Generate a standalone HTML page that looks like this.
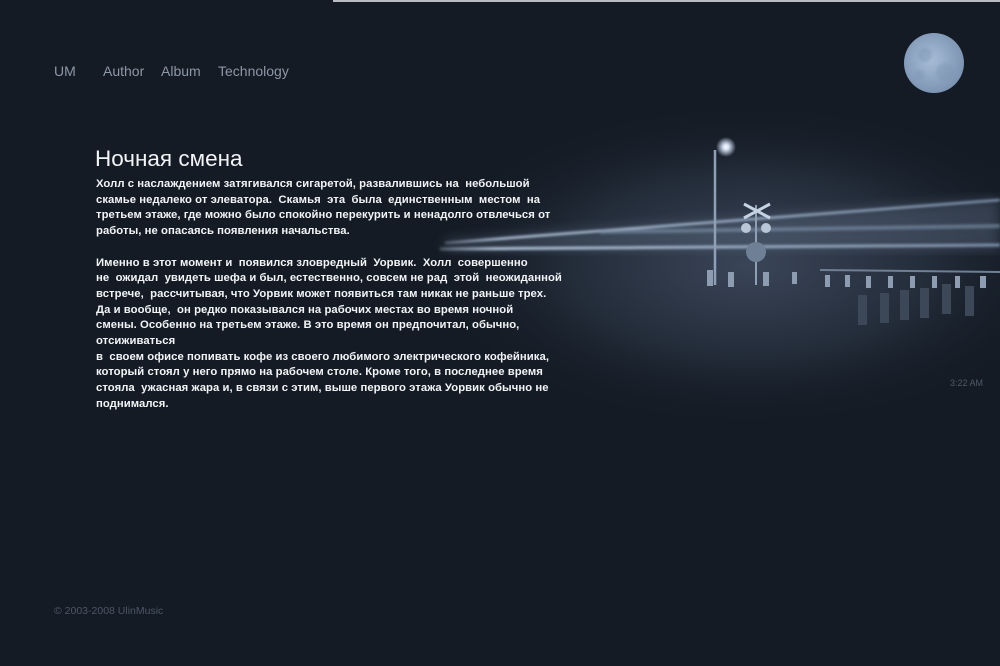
<!DOCTYPE html>
<html><head><meta charset="utf-8"><style>
html,body{margin:0;padding:0}
body{width:1000px;height:666px;background:#141b25;position:relative;overflow:hidden;font-family:"Liberation Sans",sans-serif}
.topline{position:absolute;left:333px;top:0;width:667px;height:2px;background:#b9bcc2}
.scene{position:absolute;left:0;top:0;width:1000px;height:666px}
.nav{position:absolute;top:63px;font-size:14px;color:#8d97a5}
h1{position:absolute;left:95px;top:146px;margin:0;font-size:22.5px;font-weight:normal;color:#f2f4f6}
.txt{position:absolute;left:96px;top:177px;font-size:11.3px;line-height:15.7px;color:#f2f4f6;white-space:pre;font-weight:bold;letter-spacing:0.05px}
.foot{position:absolute;left:54px;top:605px;font-size:10.5px;color:#4c5666}
.time{position:absolute;left:950px;top:378px;font-size:9px;color:#4f5967}
</style></head><body>
<svg class="scene" width="1000" height="666" viewBox="0 0 1000 666">
<defs>
<radialGradient id="glow" cx="0.5" cy="0.5" r="0.5">
<stop offset="0" stop-color="#3a4558"/><stop offset="0.55" stop-color="#232c39"/><stop offset="1" stop-color="#141b25" stop-opacity="0"/>
</radialGradient>
<radialGradient id="moon" cx="0.45" cy="0.45" r="0.6">
<stop offset="0" stop-color="#a8bdd6"/><stop offset="1" stop-color="#7891b0"/>
</radialGradient>
<radialGradient id="lamp" cx="0.5" cy="0.5" r="0.5">
<stop offset="0" stop-color="#fff"/><stop offset="0.3" stop-color="#cfdcef"/><stop offset="1" stop-color="#cfdcef" stop-opacity="0"/>
</radialGradient>
<linearGradient id="streak" x1="0" x2="1"><stop offset="0" stop-color="#c9d6e8" stop-opacity="0.3"/><stop offset="0.1" stop-color="#b5c6dc"/><stop offset="1" stop-color="#7d90aa"/></linearGradient>
<filter id="blur"><feGaussianBlur stdDeviation="6"/></filter>
<filter id="b2"><feGaussianBlur stdDeviation="1.2"/></filter>
</defs>
<ellipse cx="750" cy="265" rx="330" ry="165" fill="url(#glow)"/>
<path d="M445 240 L1000 198 L1000 250 L445 250 Z" fill="#58667c" opacity="0.45" filter="url(#blur)"/>
<g filter="url(#b2)">
<path d="M445 243 L1000 200" stroke="url(#streak)" stroke-width="2.5"/>
<path d="M440 249 L1000 245" stroke="url(#streak)" stroke-width="3"/>
<path d="M600 232 L1000 226" stroke="#8194ad" stroke-width="4" opacity="0.6"/>
</g>
<path d="M820 270 L1000 272" stroke="#6f7f95" stroke-width="2"/>
<line x1="715" y1="150" x2="715" y2="285" stroke="#8fa0b6" stroke-width="2.5"/>
<circle cx="726" cy="147" r="10" fill="url(#lamp)"/>
<line x1="756" y1="205" x2="756" y2="285" stroke="#8fa0b6" stroke-width="2"/>
<path d="M744 204 L770 218 M744 218 L770 204" stroke="#c5d2e2" stroke-width="3"/>
<circle cx="746" cy="228" r="5" fill="#b8c6d8"/><circle cx="766" cy="228" r="5" fill="#b8c6d8"/>
<circle cx="756" cy="252" r="10" fill="#6e7f96"/>
<g fill="#8d9cb0"><rect x="728" y="272" width="6" height="15"/><rect x="707" y="270" width="6" height="16"/><rect x="763" y="272" width="6" height="14"/><rect x="792" y="272" width="5" height="12"/><rect x="825" y="275" width="5" height="12"/><rect x="845" y="275" width="5" height="12"/><rect x="866" y="276" width="5" height="12"/><rect x="888" y="276" width="5" height="12"/><rect x="910" y="276" width="5" height="12"/><rect x="932" y="276" width="5" height="12"/><rect x="955" y="276" width="5" height="12"/><rect x="980" y="276" width="6" height="12"/></g>
<g fill="#3c4758"><rect x="858" y="295" width="9" height="30"/><rect x="880" y="293" width="9" height="30"/><rect x="900" y="290" width="9" height="30"/><rect x="920" y="288" width="9" height="30"/><rect x="942" y="284" width="9" height="30"/><rect x="965" y="286" width="9" height="30"/></g>
<circle cx="934" cy="63" r="30" fill="url(#moon)"/>
<g filter="url(#b2)"><circle cx="925" cy="55" r="7" fill="#7890ae" opacity="0.4"/><circle cx="945" cy="72" r="9" fill="#7890ae" opacity="0.35"/><circle cx="920" cy="75" r="5" fill="#7890ae" opacity="0.3"/></g>
</svg>
<div class="topline"></div>
<div class="nav" style="left:54px">UM</div>
<div class="nav" style="left:103px">Author</div>
<div class="nav" style="left:161px">Album</div>
<div class="nav" style="left:218px">Technology</div>
<h1>Ночная смена</h1>
<div class="txt">Холл с наслаждением затягивался сигаретой, развалившись на  небольшой
скамье недалеко от элеватора.  Скамья  эта  была  единственным  местом  на
третьем этаже, где можно было спокойно перекурить и ненадолго отвлечься от
работы, не опасаясь появления начальства.

Именно в этот момент и  появился зловредный  Уорвик.  Холл  совершенно
не  ожидал  увидеть шефа и был, естественно, совсем не рад  этой  неожиданной
встрече,  рассчитывая, что Уорвик может появиться там никак не раньше трех.
Да и вообще,  он редко показывался на рабочих местах во время ночной
смены. Особенно на третьем этаже. В это время он предпочитал, обычно,
отсиживаться
в  своем офисе попивать кофе из своего любимого электрического кофейника,
который стоял у него прямо на рабочем столе. Кроме того, в последнее время
стояла  ужасная жара и, в связи с этим, выше первого этажа Уорвик обычно не
поднимался.</div>
<div class="time">3:22 AM</div>
<div class="foot">© 2003-2008 UlinMusic</div>
</body></html>
